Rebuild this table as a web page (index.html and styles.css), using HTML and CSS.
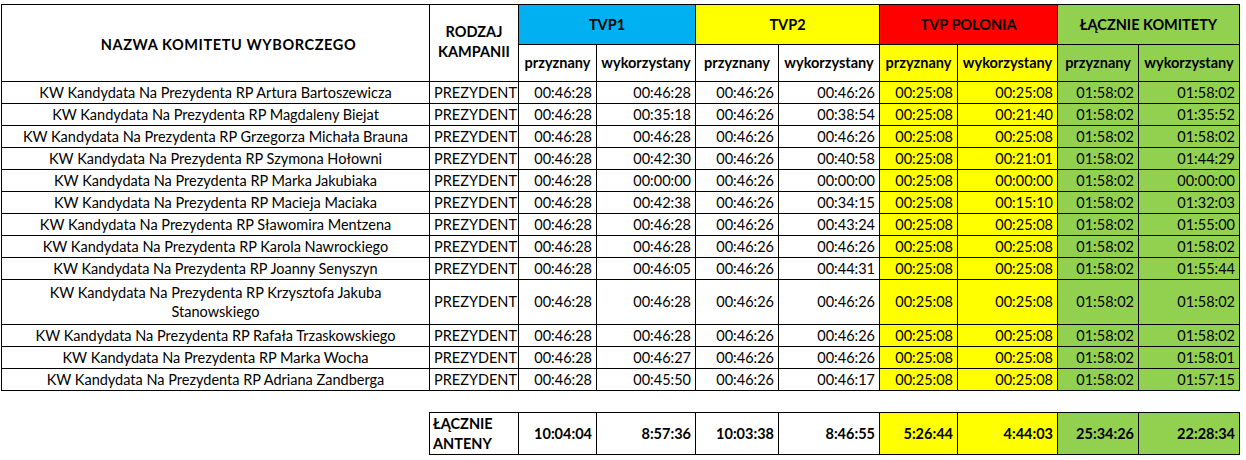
FILE: index.html
```html
<!DOCTYPE html>
<html lang="pl">
<head>
<meta charset="utf-8">
<title>Czas antenowy komitetów wyborczych</title>
<link rel="stylesheet" href="styles.css">
</head>
<body>
<table class="sheet">
  <colgroup>
    <col class="c-name"><col class="c-kind">
    <col class="c-p1"><col class="c-w1">
    <col class="c-p2"><col class="c-w2">
    <col class="c-p3"><col class="c-w3">
    <col class="c-p4"><col class="c-w4">
  </colgroup>
  <thead>
    <tr class="h1">
      <th rowspan="2" class="hname">NAZWA KOMITETU WYBORCZEGO</th>
      <th rowspan="2" class="hkind">RODZAJ<br>KAMPANII</th>
      <th colspan="2" class="tvp1">TVP1</th>
      <th colspan="2" class="tvp2">TVP2</th>
      <th colspan="2" class="polonia">TVP POLONIA</th>
      <th colspan="2" class="total">ŁĄCZNIE KOMITETY</th>
    </tr>
    <tr class="h2">
      <th>przyznany</th><th>wykorzystany</th>
      <th>przyznany</th><th>wykorzystany</th>
      <th class="yel">przyznany</th><th class="yel">wykorzystany</th>
      <th class="grn">przyznany</th><th class="grn">wykorzystany</th>
    </tr>
  </thead>
  <tbody>
    <tr><td class="name">KW Kandydata Na Prezydenta RP Artura Bartoszewicza</td><td class="kind">PREZYDENT</td><td>00:46:28</td><td>00:46:28</td><td>00:46:26</td><td>00:46:26</td><td class="yel">00:25:08</td><td class="yel">00:25:08</td><td class="grn">01:58:02</td><td class="grn">01:58:02</td></tr>
    <tr><td class="name">KW Kandydata Na Prezydenta RP Magdaleny Biejat</td><td class="kind">PREZYDENT</td><td>00:46:28</td><td>00:35:18</td><td>00:46:26</td><td>00:38:54</td><td class="yel">00:25:08</td><td class="yel">00:21:40</td><td class="grn">01:58:02</td><td class="grn">01:35:52</td></tr>
    <tr><td class="name">KW Kandydata Na Prezydenta RP Grzegorza Michała Brauna</td><td class="kind">PREZYDENT</td><td>00:46:28</td><td>00:46:28</td><td>00:46:26</td><td>00:46:26</td><td class="yel">00:25:08</td><td class="yel">00:25:08</td><td class="grn">01:58:02</td><td class="grn">01:58:02</td></tr>
    <tr><td class="name">KW Kandydata Na Prezydenta RP Szymona Hołowni</td><td class="kind">PREZYDENT</td><td>00:46:28</td><td>00:42:30</td><td>00:46:26</td><td>00:40:58</td><td class="yel">00:25:08</td><td class="yel">00:21:01</td><td class="grn">01:58:02</td><td class="grn">01:44:29</td></tr>
    <tr><td class="name">KW Kandydata Na Prezydenta RP Marka Jakubiaka</td><td class="kind">PREZYDENT</td><td>00:46:28</td><td>00:00:00</td><td>00:46:26</td><td>00:00:00</td><td class="yel">00:25:08</td><td class="yel">00:00:00</td><td class="grn">01:58:02</td><td class="grn">00:00:00</td></tr>
    <tr><td class="name">KW Kandydata Na Prezydenta RP Macieja Maciaka</td><td class="kind">PREZYDENT</td><td>00:46:28</td><td>00:42:38</td><td>00:46:26</td><td>00:34:15</td><td class="yel">00:25:08</td><td class="yel">00:15:10</td><td class="grn">01:58:02</td><td class="grn">01:32:03</td></tr>
    <tr><td class="name">KW Kandydata Na Prezydenta RP Sławomira Mentzena</td><td class="kind">PREZYDENT</td><td>00:46:28</td><td>00:46:28</td><td>00:46:26</td><td>00:43:24</td><td class="yel">00:25:08</td><td class="yel">00:25:08</td><td class="grn">01:58:02</td><td class="grn">01:55:00</td></tr>
    <tr><td class="name">KW Kandydata Na Prezydenta RP Karola Nawrockiego</td><td class="kind">PREZYDENT</td><td>00:46:28</td><td>00:46:28</td><td>00:46:26</td><td>00:46:26</td><td class="yel">00:25:08</td><td class="yel">00:25:08</td><td class="grn">01:58:02</td><td class="grn">01:58:02</td></tr>
    <tr><td class="name">KW Kandydata Na Prezydenta RP Joanny Senyszyn</td><td class="kind">PREZYDENT</td><td>00:46:28</td><td>00:46:05</td><td>00:46:26</td><td>00:44:31</td><td class="yel">00:25:08</td><td class="yel">00:25:08</td><td class="grn">01:58:02</td><td class="grn">01:55:44</td></tr>
    <tr class="tall"><td class="name">KW Kandydata Na Prezydenta RP Krzysztofa Jakuba Stanowskiego</td><td class="kind">PREZYDENT</td><td>00:46:28</td><td>00:46:28</td><td>00:46:26</td><td>00:46:26</td><td class="yel">00:25:08</td><td class="yel">00:25:08</td><td class="grn">01:58:02</td><td class="grn">01:58:02</td></tr>
    <tr><td class="name">KW Kandydata Na Prezydenta RP Rafała Trzaskowskiego</td><td class="kind">PREZYDENT</td><td>00:46:28</td><td>00:46:28</td><td>00:46:26</td><td>00:46:26</td><td class="yel">00:25:08</td><td class="yel">00:25:08</td><td class="grn">01:58:02</td><td class="grn">01:58:02</td></tr>
    <tr><td class="name">KW Kandydata Na Prezydenta RP Marka Wocha</td><td class="kind">PREZYDENT</td><td>00:46:28</td><td>00:46:27</td><td>00:46:26</td><td>00:46:26</td><td class="yel">00:25:08</td><td class="yel">00:25:08</td><td class="grn">01:58:02</td><td class="grn">01:58:01</td></tr>
    <tr><td class="name">KW Kandydata Na Prezydenta RP Adriana Zandberga</td><td class="kind">PREZYDENT</td><td>00:46:28</td><td>00:45:50</td><td>00:46:26</td><td>00:46:17</td><td class="yel">00:25:08</td><td class="yel">00:25:08</td><td class="grn">01:58:02</td><td class="grn">01:57:15</td></tr>
    <tr class="spacer"><td colspan="10"></td></tr>
    <tr class="sum">
      <td class="blank"></td>
      <td class="label">ŁĄCZNIE<br>ANTENY</td>
      <td>10:04:04</td><td>8:57:36</td>
      <td>10:03:38</td><td>8:46:55</td>
      <td class="yel">5:26:44</td><td class="yel">4:44:03</td>
      <td class="grn">25:34:26</td><td class="grn">22:28:34</td>
    </tr>
  </tbody>
</table>
</body>
</html>
```
FILE: styles.css
```css
html, body {
  margin: 0;
  padding: 0;
  background: #ffffff;
}
body {
  padding: 4px 0 0 1px;
  font-family: Lato, "Liberation Sans", sans-serif;
  font-size: 14.5px;
  color: #000000;
}
.sheet {
  border-collapse: collapse;
  table-layout: fixed;
  width: 1239px;
}
.c-name { width: 428px; }
.c-kind { width: 89px; }
.c-p1 { width: 78px; }
.c-w1 { width: 99px; }
.c-p2 { width: 83px; }
.c-w2 { width: 101px; }
.c-p3 { width: 78px; }
.c-w3 { width: 100px; }
.c-p4 { width: 81px; }
.c-w4 { width: 101px; }

.sheet th,
.sheet td {
  border: 1px solid #000000;
  padding: 0 4px;
  line-height: 20px;
  white-space: nowrap;
  overflow: hidden;
}
.sheet th {
  font-weight: 700;
  text-align: center;
  vertical-align: middle;
}
.h1 th { height: 39px; }
.h2 th { height: 36px; padding: 0 2px; }
.sheet th.hname { padding: 4px 0 0 26px; letter-spacing: 0.6px; }
.sheet th.hkind { line-height: 20px; padding: 0 0 3px; }

.tvp1 { background: #00b0f0; }
.tvp2 { background: #ffff00; }
.polonia { background: #ff0000; }
.total { background: #92d050; }
.yel { background: #ffff00; }
.grn { background: #92d050; }

.sheet td {
  height: 21px;
  text-align: right;
  vertical-align: middle;
}
.sheet td.name {
  text-align: center;
  white-space: normal;
  padding: 0 12px;
}
.sheet td.kind {
  text-align: center;
}
.tall td { height: 44px; }
.tall td.name { line-height: 19px; }

.spacer td {
  border: none;
  height: 21px;
}
.sum td {
  height: 41px;
  font-weight: 700;
}
.sum td.blank {
  border: none;
}
.sum td.label {
  text-align: left;
  padding-left: 3px;
}
```
